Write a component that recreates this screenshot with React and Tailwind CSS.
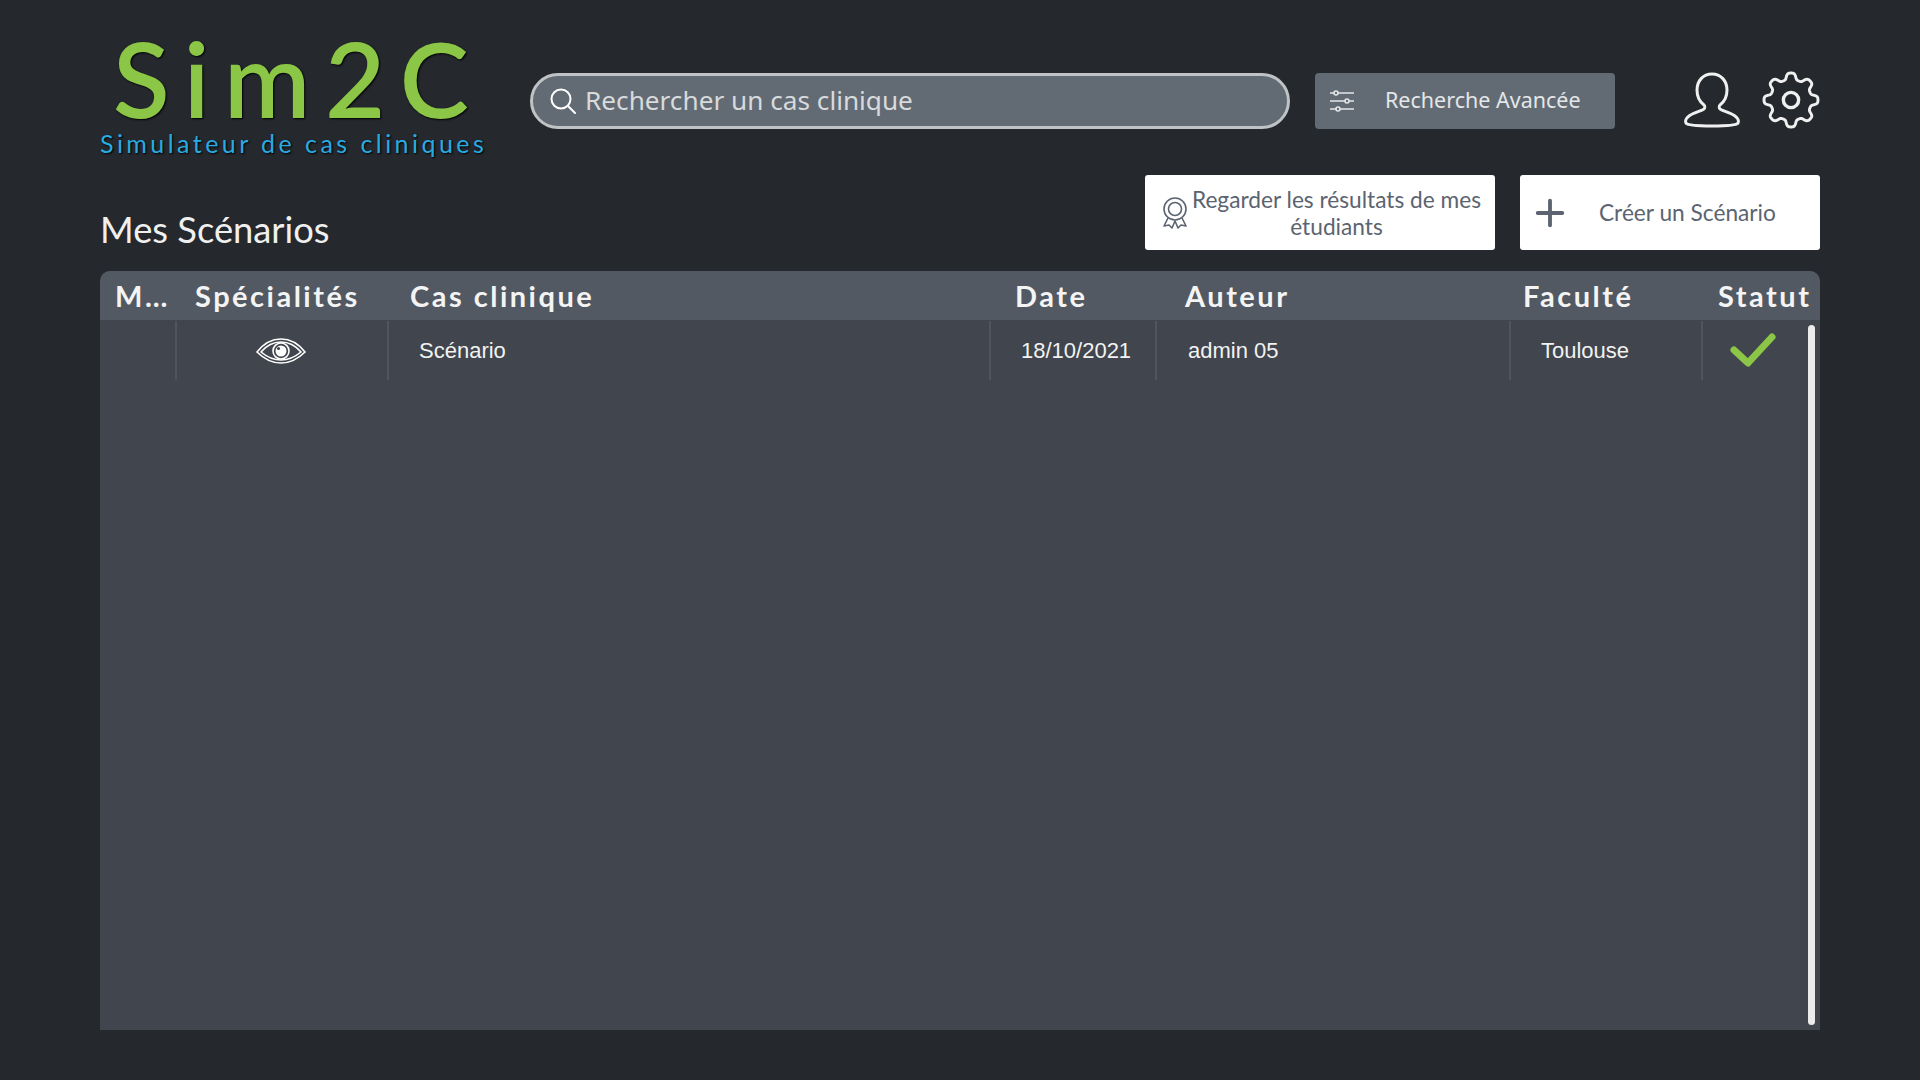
import React from 'react';
import { Plus } from 'lucide-react';

const lato = "font-['Lato',sans-serif]";
const noto = "font-['Noto_Sans',sans-serif]";
const arial = "font-['Liberation_Sans',Arial,sans-serif]";

const gearPath = () => {
  const points = [];
  for (let i = 0; i < 240; i++) {
    const t = (i / 240) * Math.PI * 2;
    const r = 29.5 + 4 * Math.tanh(1.8 * Math.cos(8 * t)) / Math.tanh(1.8);
    points.push(`${(36 + r * Math.cos(t)).toFixed(2)} ${(36 + r * Math.sin(t)).toFixed(2)}`);
  }
  return `M${points.join('L')}Z`;
};

const SearchIcon = () => (
  <svg width="26" height="26" viewBox="0 0 26 26" fill="none" stroke="#fff" strokeWidth="2" strokeLinecap="round">
    <circle cx="11" cy="11" r="9.5" />
    <path d="M18 18l7 7" />
  </svg>
);

const SlidersIcon = () => (
  <svg width="26" height="22" viewBox="0 0 26 22" fill="none" stroke="#e4e6e8" strokeWidth="1.6">
    <path d="M1 3h4M9 3h16M1 11h15M20 11h5M1 19h6M11 19h14" />
    <circle cx="7" cy="3" r="2" />
    <circle cx="18" cy="11" r="2" />
    <circle cx="9" cy="19" r="2" />
  </svg>
);

const UserIcon = () => (
  <svg width="56" height="56" viewBox="0 0 56 56" fill="none" stroke="#f0f0f0" strokeWidth="3" strokeLinejoin="round">
    <path d="M28 2c-9 0-15 7-15 16 0 6 3 12 7 15 1 1 1 3 0 4-2 2-10 3-15 7-3 2-4 5-3 7 1 2 12 3 26 3s25-1 26-3c1-2 0-5-3-7-5-4-13-5-15-7-1-1-1-3 0-4 4-3 7-9 7-15 0-9-6-16-15-16z" />
  </svg>
);

const GearIcon = () => (
  <svg width="58" height="58" viewBox="0 0 72 72" fill="none" stroke="#f0f0f0" strokeWidth="3.6">
    <path d={gearPath()} />
    <circle cx="36" cy="36" r="9.5" strokeWidth="4.2" />
  </svg>
);

const AwardIcon = () => (
  <svg width="26" height="32" viewBox="0 0 26 32" fill="none" stroke="#5b6470" strokeWidth="1.6" strokeLinejoin="round">
    <circle cx="13" cy="12" r="11" />
    <circle cx="13" cy="12" r="6.5" />
    <path d="M6 21L2 29l5-1 3 3 3-7 3 7 3-3 5 1-4-8" />
  </svg>
);

const EyeIcon = () => (
  <svg width="50" height="28" viewBox="0 0 50 28" fill="none" stroke="#fff" strokeWidth="1.6">
    <path d="M1 15C8 6 16 2 25 2s17 4 24 13c-7 7-15 11-24 11S8 22 1 15z" />
    <path d="M5 15C11 8 18 5 25 5s14 3 20 10c-6 5-13 8-20 8S11 20 5 15z" />
    <circle cx="25" cy="14" r="8" />
    <circle cx="25" cy="14" r="5.5" fill="#fff" stroke="none" />
    <circle cx="22.5" cy="11.5" r="1.6" fill="#41454d" stroke="none" />
  </svg>
);

const CheckIcon = () => (
  <svg width="46" height="34" viewBox="0 0 46 34" fill="none" stroke="#8bc646" strokeWidth="7" strokeLinecap="round" strokeLinejoin="round">
    <path d="M4 17l14 13L42 4" />
  </svg>
);

const headers = [
  { label: 'M…', cls: 'w-[95px] pl-[15px]' },
  { label: 'Spécialités', cls: 'w-[215px]' },
  { label: 'Cas clinique', cls: 'w-[605px]' },
  { label: 'Date', cls: 'w-[170px]' },
  { label: 'Auteur', cls: 'w-[338px]' },
  { label: 'Faculté', cls: 'w-[194px]' },
  { label: 'Statut', cls: 'flex-1 pl-[1px]' },
];

const App = () => {
  return (
    <div className="h-[1080px] w-[1920px] overflow-hidden bg-[#25282d] pl-[100px] pr-[100px]">
      <div className="relative flex h-[175px] items-start">
        <div className="w-[430px] shrink-0">
          <div className={`${lato} mt-[36px] ml-[13px] text-[104px] leading-[84px] font-semibold tracking-[14.5px] whitespace-nowrap text-[#8bc646] [text-shadow:1px_1px_2px_#000]`}>
            Sim2C
          </div>
          <div className={`${lato} mt-[8px] text-[25px] leading-[30px] tracking-[3.45px] whitespace-nowrap text-[#29abe2] [text-shadow:1px_1px_2px_#000]`}>
            Simulateur de cas cliniques
          </div>
        </div>
        <div className={`mt-[73px] flex h-[56px] w-[760px] items-center gap-[9px] rounded-full border-[3px] border-[#bfc3c6] bg-[#626b74] pl-[17px] ${noto} text-[26.2px] text-[#d8dadc]`}>
          <SearchIcon />
          <span className="pb-[1px]">Rechercher un cas clinique</span>
        </div>
        <div className={`mt-[73px] ml-[25px] flex h-[56px] w-[300px] items-center rounded-[4px] bg-[#626b74] pl-[14px] ${noto} text-[21.5px] text-[#e4e6e8]`}>
          <SlidersIcon />
          <span className="ml-[30px] pb-[1px]">Recherche Avancée</span>
        </div>
        <div className="mt-[72px] ml-[69px]"><UserIcon /></div>
        <div className="mt-[71px] ml-[22px]"><GearIcon /></div>
      </div>

      <div className="flex h-[96px] items-start justify-between">
        <h1 className={`${lato} mt-[31px] text-[36.3px] leading-[46px] text-[#f0f0f0]`}>Mes Scénarios</h1>
        <div className={`flex gap-[25px] ${lato} text-[22.7px] leading-[27px] text-[#5b6470]`}>
          <button className="flex h-[75px] w-[350px] items-center rounded-[3px] bg-white pl-[17px] pr-[10px]">
            <AwardIcon />
            <span className="flex-1 text-center">Regarder les résultats de mes étudiants</span>
          </button>
          <button className="flex h-[75px] w-[300px] items-center rounded-[3px] bg-white pl-[9px]">
            <Plus size={42} strokeWidth={2.2} color="#5b6470" />
            <span className="ml-[28px]">Créer un Scénario</span>
          </button>
        </div>
      </div>

      <div className="relative h-[759px] overflow-hidden rounded-t-[10px] bg-[#41454d]">
        <div className={`flex h-[49px] items-center bg-[#525962] ${lato} text-[29px] font-bold tracking-[2.5px] text-[#f4f4f4]`}>
          {headers.map((h) => (
            <div key={h.label} className={`${h.cls} whitespace-nowrap`}>{h.label}</div>
          ))}
        </div>
        <div className={`mt-[1px] flex h-[59px] items-center ${arial} text-[22px] text-[#f2f2f2]`}>
          <div className="h-full w-[75px]" />
          <div className="flex h-full w-[212px] items-center justify-center border-l-2 border-[#50555d] pr-[2px]">
            <EyeIcon />
          </div>
          <div className="flex h-full w-[602px] items-center border-l-2 border-[#50555d] pl-[30px]">Scénario</div>
          <div className="flex h-full w-[166px] items-center border-l-2 border-[#50555d] pl-[30px]">18/10/2021</div>
          <div className="flex h-full w-[354px] items-center border-l-2 border-[#50555d] pl-[31px]">admin 05</div>
          <div className="flex h-full w-[192px] items-center border-l-2 border-[#50555d] pl-[30px]">Toulouse</div>
          <div className="flex h-full items-center border-l-2 border-[#50555d] pl-[27px] pb-[1px]">
            <CheckIcon />
          </div>
        </div>
        <div className="absolute top-[54px] right-[5px] bottom-[5px] w-[7px] rounded-full bg-[#ececec]" />
      </div>
    </div>
  );
};

export default App;
